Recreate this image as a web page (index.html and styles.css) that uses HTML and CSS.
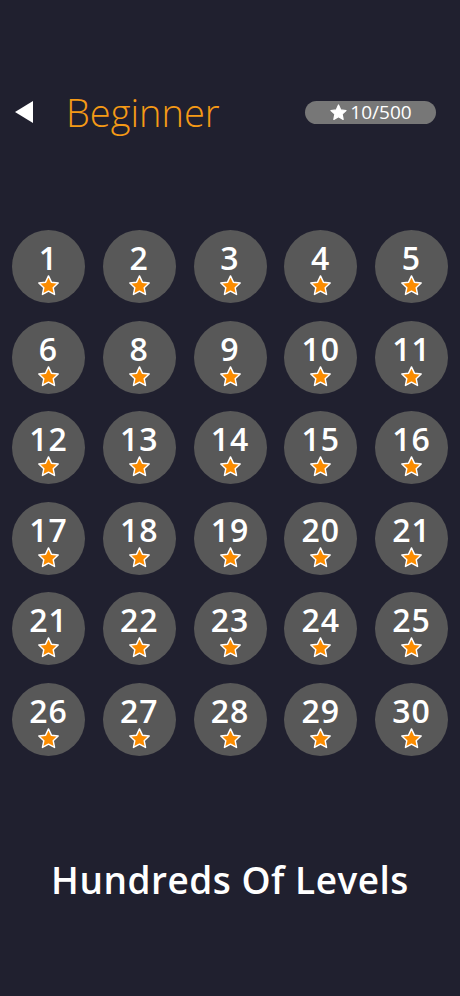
FILE: index.html
```html
<!DOCTYPE html>
<html lang="en">
<head>
    <meta charset="UTF-8">
    <meta name="viewport" content="width=device-width, initial-scale=1.0">
    <title>Levels</title>
    <link rel="stylesheet" href="styles.css">
</head>
<body>
    <div class="screen">
        <header class="top-bar">
            <div class="back"></div>
            <h1 class="title">Beginner</h1>
            <div class="score">
                <svg class="score-star" viewBox="0 0 24 24"><path d="M12 2.5l2.9 6.2 6.6.8-4.9 4.6 1.3 6.6L12 17.4l-5.9 3.3 1.3-6.6-4.9-4.6 6.6-.8z" fill="#fff" stroke="#fff" stroke-width="1.5" stroke-linejoin="round"/></svg>
                <span>10/500</span>
            </div>
        </header>

        <div class="levels" id="levels"></div>

        <p class="tagline">Hundreds Of Levels</p>
    </div>

    <script>
        // level numbers as shown in the store screenshot
        const levels = [1, 2, 3, 4, 5, 6, 8, 9, 10, 11, 12, 13, 14, 15, 16, 17, 18, 19, 20, 21, 21, 22, 23, 24, 25, 26, 27, 28, 29, 30];
        const star = '<svg class="star" viewBox="0 0 24 24"><path d="M12 2.8l2.8 6 6.5.8-4.8 4.5 1.3 6.5L12 17.4l-5.8 3.2 1.3-6.5-4.8-4.5 6.5-.8z" fill="#fb8c00" stroke="#fff" stroke-width="1.4" stroke-linejoin="round"/></svg>';
        const grid = document.getElementById('levels');
        levels.forEach(function(n) {
            const cell = document.createElement('div');
            cell.className = 'level';
            cell.innerHTML = '<span class="num">' + n + '</span>' + star;
            grid.appendChild(cell);
        });
    </script>
</body>
</html>
```
FILE: styles.css
```css
body {
    margin: 0;
    background-color: #20202f;
    font-family: "Open Sans", sans-serif;
    color: #fff;
}

.screen {
    width: 460px;
    height: 996px;
    display: flex;
    flex-direction: column;
}

.top-bar {
    display: flex;
    align-items: center;
    height: 34px;
    margin-top: 95px;
    padding: 0 24px 0 15px;
}

.back {
    width: 0;
    height: 0;
    border-top: 11.5px solid transparent;
    border-bottom: 11.5px solid transparent;
    border-right: 18px solid #fff;
}

.title {
    margin: 0 0 0 33px;
    font-weight: 300;
    font-size: 38px;
    color: #f59a16;
    flex: 1;
    line-height: 34px;
}

.score {
    display: flex;
    align-items: center;
    justify-content: center;
    gap: 2px;
    width: 131px;
    height: 23px;
    border-radius: 12px;
    background-color: #777;
    font-size: 19px;
}

.score-star {
    width: 19px;
    height: 19px;
}

.levels {
    display: grid;
    grid-template-columns: repeat(5, 73px);
    grid-auto-rows: 73px;
    column-gap: 17.75px;
    row-gap: 17.6px;
    justify-content: center;
    margin-top: 101px;
}

.level {
    border-radius: 50%;
    background-color: #585858;
    display: flex;
    flex-direction: column;
    align-items: center;
    padding-top: 10px;
    box-sizing: border-box;
}

.num {
    font-size: 32px;
    font-weight: 600;
    line-height: 35px;
    letter-spacing: 1px;
}

.star {
    width: 25px;
    height: 25px;
    margin-top: -2px;
}

.tagline {
    margin: 98px 0 0;
    text-align: center;
    font-size: 37px;
    font-weight: 600;
    letter-spacing: 0.5px;
}
```
